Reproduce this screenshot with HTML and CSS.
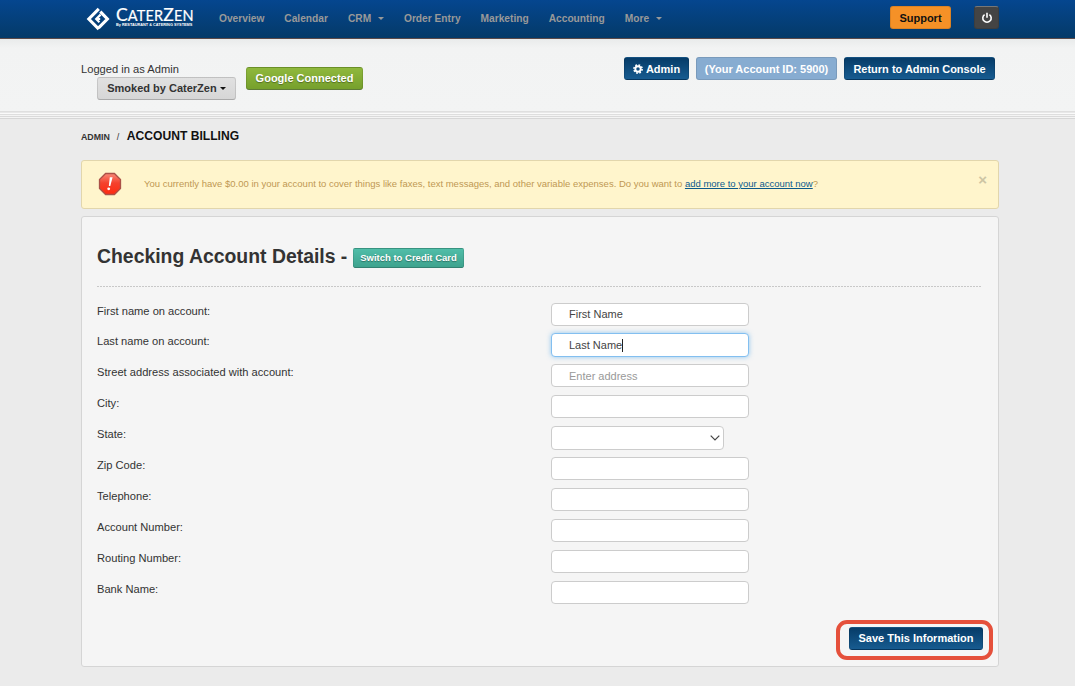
FILE: index.html
```html
<!DOCTYPE html>
<html lang="en">
<head>
    <meta charset="UTF-8">
    <meta name="viewport" content="width=device-width, initial-scale=1.0">
    <title>Account Billing</title>
    <link rel="stylesheet" href="styles.css">
</head>
<body>
    <div class="navbar">
        <div class="wrap navbar-inner">
            <a href="#" class="brand">
                <svg class="brand-mark" viewBox="0 0 24 24" width="24" height="24">
                    <g fill="none" stroke="#fff" stroke-width="3.1">
                        <path d="M12.8 1.8 L2.8 12 L12.8 22.2"/>
                        <path d="M14.3 4.6 L21.4 12 L12.6 20.8"/>
                        <path d="M14.6 7.6 L10.2 12 L13.4 15.2 M10.2 12 H14.2" stroke-width="2.2"/>
                    </g>
                </svg>
                <span class="brand-text">
                    <span class="brand-name">C<small>ATER</small>Z<small>EN</small></span>
                    <span class="brand-sub">By RESTAURANT &amp; CATERING SYSTEMS</span>
                </span>
            </a>
            <div class="nav">
                <a href="#">Overview</a>
                <a href="#">Calendar</a>
                <a href="#">CRM <b class="caret"></b></a>
                <a href="#">Order Entry</a>
                <a href="#">Marketing</a>
                <a href="#">Accounting</a>
                <a href="#">More <b class="caret"></b></a>
            </div>
            <div class="nav-right">
                <button class="btn btn-support">Support</button>
                <button class="btn btn-power">
                    <svg viewBox="0 0 12 12" width="12" height="12">
                        <path d="M3.6 2.6 A4.2 4.2 0 1 0 8.4 2.6 M6 0.8 V5.8" fill="none" stroke="#fff" stroke-width="1.6"/>
                    </svg>
                </button>
            </div>
        </div>
    </div>

    <div class="subhead">
        <div class="wrap subhead-inner">
            <div class="login">
                <span class="login-text">Logged in as Admin</span>
                <button class="btn btn-grey">Smoked by CaterZen <b class="caret"></b></button>
            </div>
            <button class="btn btn-green">Google Connected</button>
            <div class="subhead-right">
                <button class="btn btn-blue btn-admin">
                    <svg viewBox="0 0 10 10" width="10" height="10">
                        <circle cx="5" cy="5" r="2.7" fill="none" stroke="#fff" stroke-width="1.9"/>
                        <circle cx="5" cy="5" r="4.1" fill="none" stroke="#fff" stroke-width="1.6" stroke-dasharray="1.7 1.52"/>
                    </svg>
                    Admin
                </button>
                <button class="btn btn-light">(Your Account ID: 5900)</button>
                <button class="btn btn-blue btn-return">Return to Admin Console</button>
            </div>
        </div>
    </div>
    <div class="stripes"></div>

    <div class="wrap">
        <div class="breadcrumb">
            <a href="#">ADMIN</a>
            <span class="divider">/</span>
            <h1>ACCOUNT BILLING</h1>
        </div>

        <div class="alert">
            <svg class="alert-icon" viewBox="0 0 24 24" width="24" height="24">
                <defs>
                    <linearGradient id="red" x1="0" y1="0" x2="0" y2="1">
                        <stop offset="0" stop-color="#f98a78"/>
                        <stop offset="0.45" stop-color="#f4422e"/>
                        <stop offset="1" stop-color="#ff2a10"/>
                    </linearGradient>
                </defs>
                <path d="M7.6 1.5 H16.4 L22.5 7.6 V16.4 L16.4 22.5 H7.6 L1.5 16.4 V7.6 Z" fill="url(#red)" stroke="#ab5148" stroke-width="1.3"/>
                <path d="M11.8 5.3 L14.6 5.3 L12.3 14 L10.8 14 Z" fill="#fff"/>
                <circle cx="10.7" cy="16.8" r="1.4" fill="#fff"/>
            </svg>
            <p>You currently have $0.00 in your account to cover things like faxes, text messages, and other variable expenses. Do you want to <a href="#">add more to your account now</a>?</p>
            <span class="close">&times;</span>
        </div>

        <div class="well">
            <div class="well-title">
                <h2>Checking Account Details -</h2>
                <button class="btn btn-teal">Switch to Credit Card</button>
            </div>
            <form>
                <div class="row"><label>First name on account:</label><input type="text" value="First Name"></div>
                <div class="row"><label>Last name on account:</label><div class="input focused"><span>Last Name</span></div></div>
                <div class="row"><label>Street address associated with account:</label><input type="text" placeholder="Enter address"></div>
                <div class="row"><label>City:</label><input type="text"></div>
                <div class="row">
                    <label>State:</label>
                    <div class="select">
                        <svg viewBox="0 0 10 6" width="10" height="6"><path d="M0.7 0.7 L5 5 L9.3 0.7" fill="none" stroke="#444" stroke-width="1.2"/></svg>
                    </div>
                </div>
                <div class="row"><label>Zip Code:</label><input type="text"></div>
                <div class="row"><label>Telephone:</label><input type="text"></div>
                <div class="row"><label>Account Number:</label><input type="text"></div>
                <div class="row"><label>Routing Number:</label><input type="text"></div>
                <div class="row"><label>Bank Name:</label><input type="text"></div>
            </form>
            <div class="actions">
                <div class="highlight">
                    <button class="btn btn-blue btn-save">Save This Information</button>
                </div>
            </div>
        </div>
    </div>
</body>
</html>
```

FILE: styles.css
```css
* {
    box-sizing: border-box;
}
body {
    margin: 0;
    background: #ebebeb;
    font-family: "Liberation Sans", Arial, sans-serif;
    font-size: 11px;
    color: #333;
}
.wrap {
    width: 918px;
    margin-left: 81px;
}
.navbar {
    height: 39px;
    background: linear-gradient(#05468f, #043a68);
    border-bottom: 1px solid #5c4a48;
}
.navbar-inner {
    display: flex;
    height: 38px;
}
.brand {
    display: flex;
    width: 128px;
    padding: 7px 0 0 5px;
    color: #fff;
    text-decoration: none;
}
.brand-text {
    display: flex;
    flex-direction: column;
    margin-left: 6px;
}
.brand-name {
    font-family: Lato, sans-serif;
    font-size: 17.5px;
    line-height: 16px;
    height: 16px;
    letter-spacing: 0.15px;
    -webkit-text-stroke: 0.2px #fff;
}
.brand-name small {
    font-size: 14.5px;
}
.brand-sub {
    font-size: 3.85px;
    line-height: 5px;
    font-weight: bold;
    white-space: nowrap;
}
.nav {
    display: flex;
    gap: 20px;
    padding-left: 10px;
}
.nav a {
    color: #999;
    font-size: 10.2px;
    font-weight: bold;
    line-height: 37px;
    text-decoration: none;
    white-space: nowrap;
}
.caret {
    display: inline-block;
    border-left: 3px solid transparent;
    border-right: 3px solid transparent;
    border-top: 3px solid;
    vertical-align: 2px;
    margin-left: 4px;
}
.nav-right {
    display: flex;
    gap: 23px;
    margin-left: auto;
    padding-top: 6px;
}
.btn {
    height: 23px;
    padding: 0;
    border: 1px solid rgba(0, 0, 0, 0.1);
    border-radius: 3px;
    font-family: inherit;
    font-size: 11px;
    font-weight: bold;
    line-height: 20px;
    white-space: nowrap;
    color: #fff;
}
.btn-support {
    width: 61px;
    background: #f59127;
    color: #111;
}
.btn-power {
    display: flex;
    align-items: center;
    justify-content: center;
    width: 25px;
    background: #444;
    border-top-color: #777;
}
.subhead {
    height: 72px;
    background: linear-gradient(#e9ebeb, #f2f3f3 9px, #f3f4f4);
}
.subhead-inner {
    display: flex;
    align-items: flex-start;
}
.login {
    display: flex;
    flex-direction: column;
    width: 165px;
    padding-top: 23px;
}
.login-text {
    font-size: 11.15px;
    line-height: 15px;
}
.btn-grey {
    width: 139px;
    margin-left: 16px;
    padding-bottom: 1px;
    background: linear-gradient(#e1e1e1, #d6d6d6);
    border-bottom-color: #aaa;
    color: #333;
}
.btn-grey .caret {
    margin-left: 0;
    color: #111;
}
.btn-green {
    width: 117px;
    margin-top: 28px;
    padding-bottom: 1px;
    background: linear-gradient(#8fb83d, #76a02c);
    border-bottom-color: #5e7b37;
    text-shadow: 0 1px 1px rgba(0, 0, 0, 0.35);
}
.subhead-right {
    display: flex;
    gap: 7px;
    margin-left: auto;
    margin-right: 4px;
    padding-top: 18px;
}
.btn-blue {
    background: linear-gradient(#063c68, #175b90);
}
.btn-admin {
    display: flex;
    align-items: center;
    justify-content: center;
    gap: 3px;
    width: 65px;
}
.btn-light {
    width: 141px;
    background: #87acd1;
}
.btn-return {
    width: 151px;
}
.stripes {
    height: 8px;
    background: linear-gradient(#dfdfdf 1px, #e8e8e8 1px 2px, #fafafa 2px 3px, #dedede 3px 4px, #f4f4f4 4px 5px, #dadada 5px 6px, #f4f4f4 6px 7px, #d6d6d6 7px);
}
.breadcrumb {
    display: flex;
    align-items: baseline;
    height: 41px;
    padding-top: 9px;
}
.breadcrumb a {
    color: #333;
    font-size: 8.8px;
    font-weight: bold;
    text-decoration: none;
}
.breadcrumb .divider {
    width: 17px;
    padding-left: 7px;
    font-size: 9px;
}
.breadcrumb h1 {
    margin: 0;
    font-size: 12.1px;
    line-height: 16px;
    color: #111;
}
.alert {
    display: flex;
    height: 49px;
    padding: 11px 11px 0 16px;
    background: #fff5cc;
    border: 1px solid #e2d6ac;
    border-radius: 3px;
}
.alert p {
    margin: 5px 0 0 22px;
    font-size: 9.5px;
    line-height: 14px;
    color: #c09853;
    white-space: nowrap;
}
.alert a {
    color: #0b5a8c;
}
.close {
    margin-left: auto;
    font-size: 15px;
    line-height: 15px;
    font-weight: bold;
    color: #cdc5a4;
}
.well {
    height: 451px;
    margin-top: 7px;
    padding: 0 15px;
    background: #f5f5f5;
    border: 1px solid #d5d5d5;
    border-radius: 3px;
}
.well-title {
    display: flex;
    align-items: flex-start;
    height: 70px;
    margin-right: 1px;
    padding-top: 28px;
    background: repeating-linear-gradient(90deg, #c8c8c8 0 2px, transparent 2px 3px) bottom / 100% 1px no-repeat;
}
.well-title h2 {
    width: 256px;
    margin: 0;
    font-size: 19.4px;
    line-height: 23px;
    white-space: nowrap;
}
.btn-teal {
    width: 111px;
    height: 20px;
    margin-top: 3px;
    padding-bottom: 1px;
    background: linear-gradient(#50bda8, #3ea38e);
    border-bottom-color: #338171;
    border-radius: 2px;
    font-size: 9.5px;
    line-height: 17px;
    text-shadow: 0 1px 1px rgba(0, 0, 0, 0.35);
}
form {
    padding-top: 15.5px;
}
.row {
    display: flex;
    height: 30.9px;
}
.row label {
    width: 454px;
    font-size: 11.13px;
    line-height: 16px;
}
.row input,
.input,
.select {
    width: 198px;
    height: 23px;
    padding: 0 17px;
    background: #fff;
    border: 1px solid #ccc;
    border-radius: 4px;
    font-family: inherit;
    font-size: 11px;
    line-height: 22px;
    color: #444;
}
.row input::placeholder {
    color: #999;
}
.input.focused {
    height: 24px;
    border-color: #83bff0;
    box-shadow: 0 0 5px rgba(82, 168, 236, 0.6);
}
.focused span {
    display: inline-block;
    height: 13px;
    line-height: 13px;
    border-right: 1px solid #222;
}
.select {
    display: flex;
    align-items: center;
    justify-content: flex-end;
    width: 173px;
    height: 24px;
    padding: 0 3px;
}
.actions {
    display: flex;
    justify-content: flex-end;
    margin: 8.5px -10px 0 0;
}
.highlight {
    width: 157px;
    height: 40px;
    padding: 3px 0 0 9px;
    border: 4px solid #e5503b;
    border-radius: 11px;
}
.btn-save {
    width: 134px;
}
```
